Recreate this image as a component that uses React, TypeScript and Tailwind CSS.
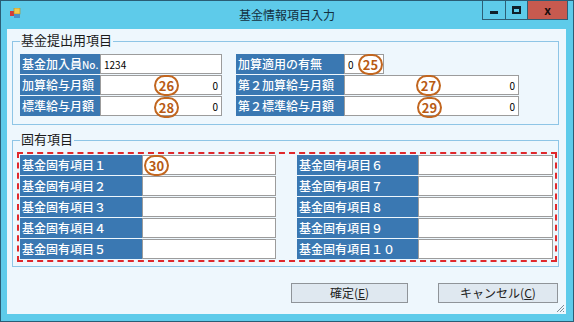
import React from "react";

const FONT = { fontFamily: '"Noto Sans CJK JP", "Noto Sans", sans-serif' };

function Circle({ n, className }: { n: string; className: string }) {
  return (
    <span
      className={
        "absolute w-[25px] h-[21px] rounded-full border-2 border-[#c2661f] text-[#b85a14] text-[13px] font-bold leading-none flex items-center justify-center " +
        className
      }
    >
      {n}
    </span>
  );
}

function Label({ children, w }: { children: React.ReactNode; w: string }) {
  return (
    <div className={"h-full bg-[#3a78b2] text-white text-[12px] font-medium flex items-center pl-[2px] whitespace-nowrap " + w}>
      {children}
    </div>
  );
}

function Input({
  w,
  value,
  align = "right",
  children,
}: {
  w: string;
  value?: string;
  align?: "left" | "right";
  children?: React.ReactNode;
}) {
  return (
    <div
      className={
        "relative h-full bg-white border border-[#9c9c9c] flex items-center text-[10px] text-black px-[3px] " +
        (align === "right" ? "justify-end " : "justify-start ") +
        w
      }
    >
      {value}
      {children}
    </div>
  );
}

function Row({ children }: { children: React.ReactNode }) {
  return <div className="flex h-[20px]">{children}</div>;
}

export default function App() {
  const left = ["基金固有項目１", "基金固有項目２", "基金固有項目３", "基金固有項目４", "基金固有項目５"];
  const right = ["基金固有項目６", "基金固有項目７", "基金固有項目８", "基金固有項目９", "基金固有項目１０"];
  return (
    <div style={FONT} className="w-[574px] h-[322px] bg-[#5ecbea] border border-[#2a5d75] flex flex-col text-[#1b1b1b]">
      {/* title bar */}
      <div className="h-[28px] grid grid-cols-[1fr_auto_1fr] shrink-0">
        <div className="flex items-start pt-[7px] pl-[9px]">
          <svg width="11" height="11" viewBox="0 0 11 11">
            <rect x="0" y="3" width="5" height="5" fill="#d23a3a" />
            <rect x="4" y="0" width="6" height="6" fill="#f2c94c" stroke="#b08a20" strokeWidth="0.6" />
            <rect x="4" y="6" width="6" height="4" fill="#4a90c8" />
          </svg>
        </div>
        <div className="flex items-center justify-center text-[12px] text-[#13303f] pb-[1px]">基金情報項目入力</div>
        <div className="flex justify-end items-start pr-[5px]">
          <div className="flex h-[19px] border border-t-0 border-[#2d5f76]">
            <div className="w-[23px] flex items-center justify-center border-r border-[#2d5f76]">
              <div className="w-[8px] h-[3px] bg-[#10202a] mt-[5px]" />
            </div>
            <div className="w-[22px] flex items-center justify-center border-r border-[#2d5f76]">
              <div className="w-[9px] h-[8px] border-2 border-t-[3px] border-[#10202a]" />
            </div>
            <div className="w-[39px] bg-[#c75a4f] flex items-center justify-center text-[#1a0d0d] text-[12px] font-bold leading-none">
              x
            </div>
          </div>
        </div>
      </div>

      {/* client */}
      <div className="ml-[6px] mr-[7px] mb-[7px] flex-1 bg-[#eef7fd] relative flex flex-col pl-[5px] pr-[7px] pt-[12px]">
        {/* group 1 */}
        <div className="relative h-[84px] border border-[#8ec5e6] pt-[12px] pl-[7px] flex gap-[14px]">
          <span className="absolute left-[7px] -top-[12px] px-[1px] bg-[#eef7fd] text-[13px] leading-[20px] text-[#1b1b1b]">
            基金提出用項目
          </span>
          <div className="flex flex-col gap-[1px]">
            <Row>
              <Label w="w-[80px]">
                基金加入員<span className="text-[10px]">No.</span>
              </Label>
              <Input w="w-[122px]" value="1234" align="left" />
            </Row>
            <Row>
              <Label w="w-[80px]">加算給与月額</Label>
              <Input w="w-[122px]" value="0">
                <Circle n="26" className="left-[53px] top-[-1px]" />
              </Input>
            </Row>
            <Row>
              <Label w="w-[80px]">標準給与月額</Label>
              <Input w="w-[122px]" value="0">
                <Circle n="28" className="left-[53px] top-[0px]" />
              </Input>
            </Row>
          </div>
          <div className="flex flex-col gap-[1px]">
            <Row>
              <Label w="w-[108px]">加算適用の有無</Label>
              <Input w="w-[40px]" value="0" align="left">
                <Circle n="25" className="left-[13px] top-[-1px]" />
              </Input>
            </Row>
            <Row>
              <Label w="w-[108px]">第２加算給与月額</Label>
              <Input w="w-[175px]" value="0">
                <Circle n="27" className="left-[71px] top-[-1px]" />
              </Input>
            </Row>
            <Row>
              <Label w="w-[108px]">第２標準給与月額</Label>
              <Input w="w-[175px]" value="0">
                <Circle n="29" className="left-[72px] top-[0px]" />
              </Input>
            </Row>
          </div>
        </div>

        {/* group 2 */}
        <div className="relative mt-[15px] h-[127px] border border-[#8ec5e6] pt-[11px] pl-[4px]">
          <span className="absolute left-[7px] -top-[12px] px-[1px] bg-[#eef7fd] text-[13px] leading-[20px] text-[#1b1b1b]">
            固有項目
          </span>
          <div className="w-[540px] h-[110px] border-2 border-dashed border-[#e0282c] pt-[1px] pl-[1px] flex gap-[21px]">
            <div className="flex flex-col gap-[1px]">
              {left.map((t, i) => (
                <Row key={t}>
                  <Label w="w-[122px]">{t}</Label>
                  <Input w="w-[134px]">{i === 0 && <Circle n="30" className="left-[1px] top-[-1px]" />}</Input>
                </Row>
              ))}
            </div>
            <div className="flex flex-col gap-[1px]">
              {right.map((t) => (
                <Row key={t}>
                  <Label w="w-[121px]">{t}</Label>
                  <Input w="w-[135px]" />
                </Row>
              ))}
            </div>
          </div>
        </div>

        {/* buttons */}
        <div className="mt-[16px] flex justify-end gap-[30px] pr-[1px]">
          <button className="w-[117px] h-[20px] bg-[#dfe8f0] border border-[#8f9499] text-[12px] text-[#222] flex items-center justify-center leading-none">
            確定(<u>E</u>)
          </button>
          <button className="w-[120px] h-[20px] bg-[#dfe8f0] border border-[#8f9499] text-[12px] text-[#222] flex items-center justify-center leading-none">
            キャンセル(<u>C</u>)
          </button>
        </div>

        {/* resize grip */}
        <svg className="absolute right-[1px] bottom-[1px]" width="10" height="10" viewBox="0 0 10 10">
          <path d="M9 2 L2 9 M9 5 L5 9 M9 8 L8 9" stroke="#7d8c96" strokeWidth="1" />
        </svg>
      </div>
    </div>
  );
}
